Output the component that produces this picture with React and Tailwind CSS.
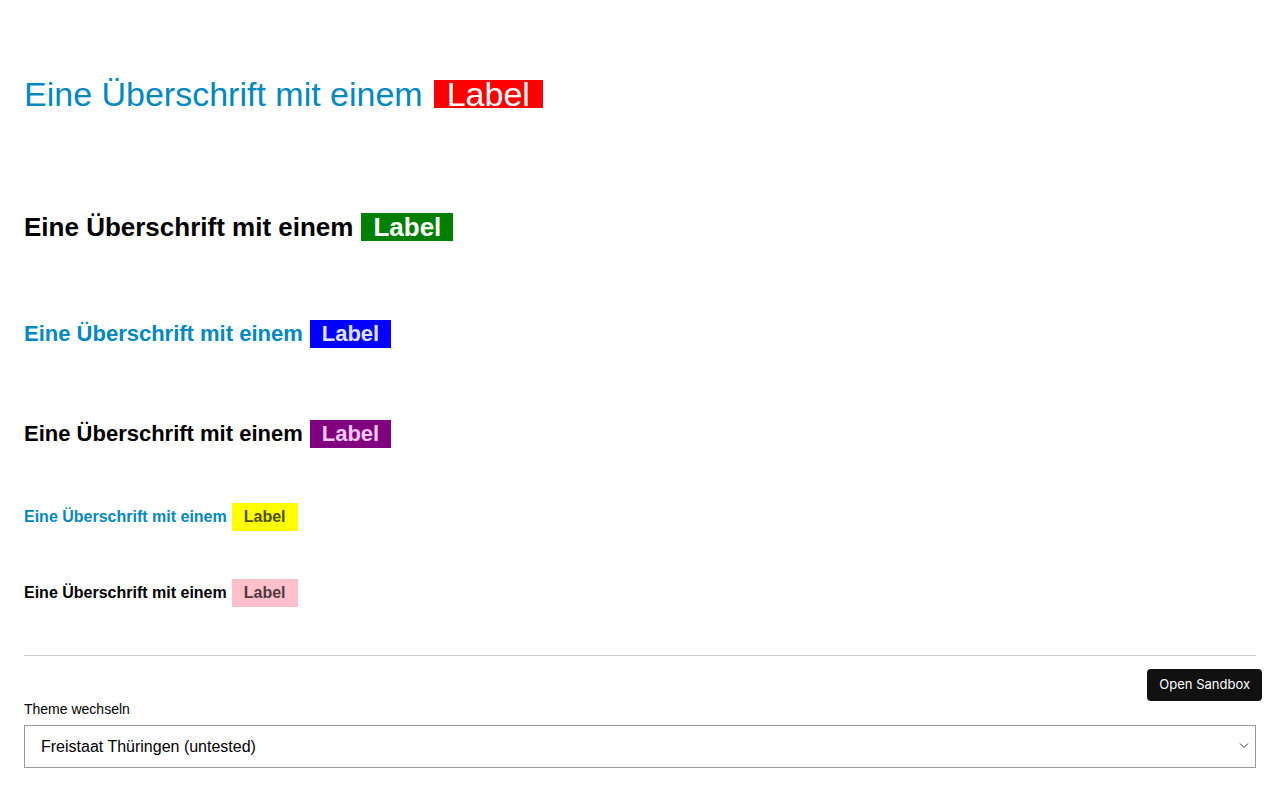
import React from "react";

const rows = [
  { size: "text-[34px] font-normal", color: "text-[#0088c2]", label: "bg-[#ff0000] text-white", gap: "ml-[11px] px-[13px]", mt: "mt-[80px]" },
  { size: "text-[26px] font-bold", color: "text-black", label: "bg-[#008000] text-white", gap: "ml-[8px] px-[12px]", mt: "mt-[105px]" },
  { size: "text-[22px] font-bold", color: "text-[#0088c2]", label: "bg-[#0000ff] text-[#e0e0ff]", gap: "ml-[7px] px-[12px]", mt: "mt-[79px]" },
  { size: "text-[22px] font-bold", color: "text-black", label: "bg-[#800080] text-[#f5c8f5]", gap: "ml-[7px] px-[12px]", mt: "mt-[72px]" },
  { size: "text-[16px] font-bold", color: "text-[#0088c2]", label: "bg-[#ffff00] text-[#4d4d00]", gap: "ml-[5px] px-[12px]", mt: "mt-[55px]" },
  { size: "text-[16px] font-bold", color: "text-black", label: "bg-[#ffc0cb] text-[#4d3a3d]", gap: "ml-[5px] px-[12px]", mt: "mt-[48px]" },
];

export default function App() {
  return (
    <div className="relative min-h-[793px] bg-white px-6 font-['Liberation_Sans',Arial,sans-serif]">
      <div className="flex flex-col">
        {rows.map((r, i) => (
          <div key={i} className={`flex h-[28px] items-center ${r.mt} ${r.size}`}>
            <span className={`leading-none ${r.color}`}>Eine Überschrift mit einem</span>
            <span className={`flex h-[28px] items-center leading-none ${r.label} ${r.gap}`}>Label</span>
          </div>
        ))}
      </div>

      <hr className="mt-[48px] border-t border-[#cccccc]" />

      <div className="mt-[45px] text-[14px] leading-4 text-black">Theme wechseln</div>
      <div className="relative mt-[8px]">
        <select
          defaultValue="th"
          className="h-[43px] w-full appearance-none border border-[#999999] bg-white pl-4 text-[16px] text-black outline-none"
        >
          <option value="th">Freistaat Thüringen (untested)</option>
        </select>
        <svg
          className="pointer-events-none absolute right-[7px] top-[17px]"
          width="10"
          height="7"
          viewBox="0 0 10 7"
          fill="none"
        >
          <path d="M1 1.5 5 5.5 9 1.5" stroke="#333" strokeWidth="1" />
        </svg>
      </div>

      <button className="absolute right-[18px] top-[669px] h-[32px] rounded-[4px] bg-[#111111] px-3 font-['Inter',sans-serif] text-[13px] text-white">
        Open Sandbox
      </button>
    </div>
  );
}
